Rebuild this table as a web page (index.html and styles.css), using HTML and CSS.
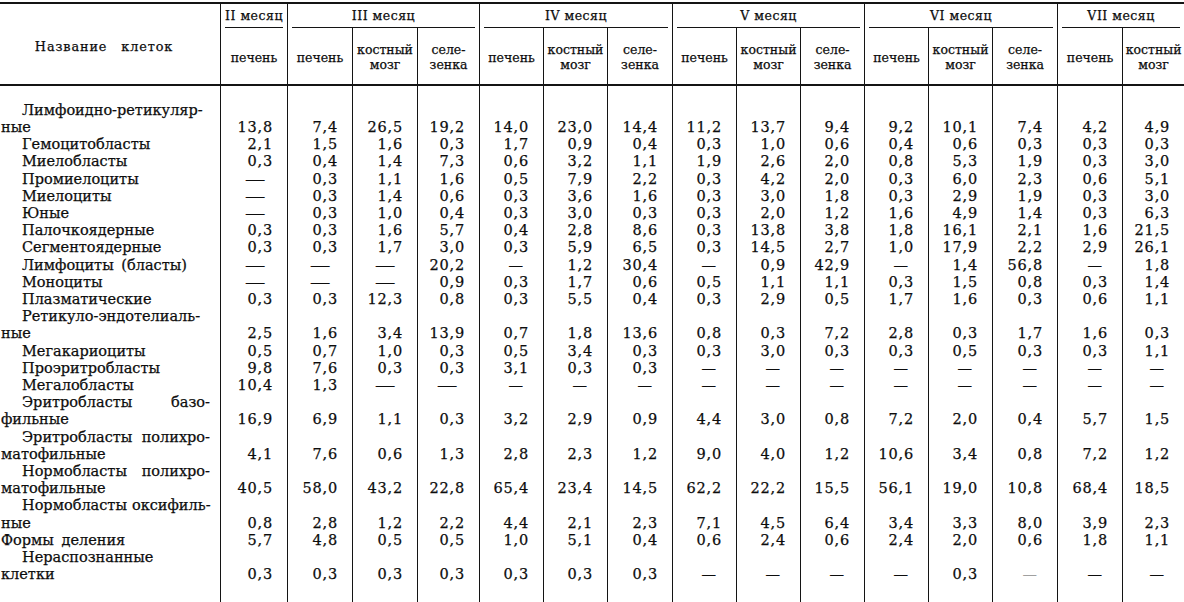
FILE: index.html
```html
<!DOCTYPE html>
<html lang="ru">
<head>
<meta charset="utf-8">
<title>Таблица</title>
<link rel="stylesheet" href="styles.css">
</head>
<body>
<table class="tbl">
<colgroup>
<col style="width:220px"><col style="width:67px"><col style="width:65px"><col style="width:65px"><col style="width:62px"><col style="width:64px"><col style="width:64px"><col style="width:65px"><col style="width:64px"><col style="width:64px"><col style="width:64px"><col style="width:64px"><col style="width:64px"><col style="width:65px"><col style="width:65px"><col style="width:62px">
</colgroup>
<thead>
<tr class="hm">
<th class="hname" rowspan="2">Название клеток</th>
<th class="mon" colspan="1"><div class="ml">II месяц</div></th>
<th class="mon" colspan="3"><div class="ml">III месяц</div></th>
<th class="mon" colspan="3"><div class="ml">IV месяц</div></th>
<th class="mon" colspan="3"><div class="ml">V месяц</div></th>
<th class="mon" colspan="3"><div class="ml">VI месяц</div></th>
<th class="mon" colspan="2"><div class="ml">VII месяц</div></th>
</tr>
<tr class="hs">
<th class="sub">печень</th>
<th class="sub">печень</th><th class="sub">костный<br>мозг</th><th class="sub">селе-<br>зенка</th>
<th class="sub">печень</th><th class="sub">костный<br>мозг</th><th class="sub">селе-<br>зенка</th>
<th class="sub">печень</th><th class="sub">костный<br>мозг</th><th class="sub">селе-<br>зенка</th>
<th class="sub">печень</th><th class="sub">костный<br>мозг</th><th class="sub">селе-<br>зенка</th>
<th class="sub">печень</th><th class="sub">костный<br>мозг</th>
</tr>
</thead>
<tbody>
<tr class="first"><td class="lab"><div class="l1">Лимфоидно-ретикуляр-</div><div class="l2">ные</div></td><td>13,8</td><td>7,4</td><td>26,5</td><td>19,2</td><td>14,0</td><td>23,0</td><td>14,4</td><td>11,2</td><td>13,7</td><td>9,4</td><td>9,2</td><td>10,1</td><td>7,4</td><td>4,2</td><td>4,9</td></tr>
<tr><td class="lab"><div class="l1">Гемоцитобласты</div></td><td>2,1</td><td>1,5</td><td>1,6</td><td>0,3</td><td>1,7</td><td>0,9</td><td>0,4</td><td>0,3</td><td>1,0</td><td>0,6</td><td>0,4</td><td>0,6</td><td>0,3</td><td>0,3</td><td>0,3</td></tr>
<tr><td class="lab"><div class="l1">Миелобласты</div></td><td>0,3</td><td>0,4</td><td>1,4</td><td>7,3</td><td>0,6</td><td>3,2</td><td>1,1</td><td>1,9</td><td>2,6</td><td>2,0</td><td>0,8</td><td>5,3</td><td>1,9</td><td>0,3</td><td>3,0</td></tr>
<tr><td class="lab"><div class="l1">Промиелоциты</div></td><td class="d lg"><span>—</span></td><td>0,3</td><td>1,1</td><td>1,6</td><td>0,5</td><td>7,9</td><td>2,2</td><td>0,3</td><td>4,2</td><td>2,0</td><td>0,3</td><td>6,0</td><td>2,3</td><td>0,6</td><td>5,1</td></tr>
<tr><td class="lab"><div class="l1">Миелоциты</div></td><td class="d lg"><span>—</span></td><td>0,3</td><td>1,4</td><td>0,6</td><td>0,3</td><td>3,6</td><td>1,6</td><td>0,3</td><td>3,0</td><td>1,8</td><td>0,3</td><td>2,9</td><td>1,9</td><td>0,3</td><td>3,0</td></tr>
<tr><td class="lab"><div class="l1">Юные</div></td><td class="d lg"><span>—</span></td><td>0,3</td><td>1,0</td><td>0,4</td><td>0,3</td><td>3,0</td><td>0,3</td><td>0,3</td><td>2,0</td><td>1,2</td><td>1,6</td><td>4,9</td><td>1,4</td><td>0,3</td><td>6,3</td></tr>
<tr><td class="lab"><div class="l1">Палочкоядерные</div></td><td>0,3</td><td>0,3</td><td>1,6</td><td>5,7</td><td>0,4</td><td>2,8</td><td>8,6</td><td>0,3</td><td>13,8</td><td>3,8</td><td>1,8</td><td>16,1</td><td>2,1</td><td>1,6</td><td>21,5</td></tr>
<tr><td class="lab"><div class="l1">Сегментоядерные</div></td><td>0,3</td><td>0,3</td><td>1,7</td><td>3,0</td><td>0,3</td><td>5,9</td><td>6,5</td><td>0,3</td><td>14,5</td><td>2,7</td><td>1,0</td><td>17,9</td><td>2,2</td><td>2,9</td><td>26,1</td></tr>
<tr><td class="lab"><div class="l1 ws">Лимфоциты (бласты)</div></td><td class="d lg"><span>—</span></td><td class="d lg"><span>—</span></td><td class="d lg"><span>—</span></td><td>20,2</td><td class="d"><span>—</span></td><td>1,2</td><td>30,4</td><td class="d"><span>—</span></td><td>0,9</td><td>42,9</td><td class="d"><span>—</span></td><td>1,4</td><td>56,8</td><td class="d"><span>—</span></td><td>1,8</td></tr>
<tr><td class="lab"><div class="l1">Моноциты</div></td><td class="d lg"><span>—</span></td><td class="d lg"><span>—</span></td><td class="d lg"><span>—</span></td><td>0,9</td><td>0,3</td><td>1,7</td><td>0,6</td><td>0,5</td><td>1,1</td><td>1,1</td><td>0,3</td><td>1,5</td><td>0,8</td><td>0,3</td><td>1,4</td></tr>
<tr><td class="lab"><div class="l1">Плазматические</div></td><td>0,3</td><td>0,3</td><td>12,3</td><td>0,8</td><td>0,3</td><td>5,5</td><td>0,4</td><td>0,3</td><td>2,9</td><td>0,5</td><td>1,7</td><td>1,6</td><td>0,3</td><td>0,6</td><td>1,1</td></tr>
<tr><td class="lab"><div class="l1">Ретикуло-эндотелиаль-</div><div class="l2">ные</div></td><td>2,5</td><td>1,6</td><td>3,4</td><td>13,9</td><td>0,7</td><td>1,8</td><td>13,6</td><td>0,8</td><td>0,3</td><td>7,2</td><td>2,8</td><td>0,3</td><td>1,7</td><td>1,6</td><td>0,3</td></tr>
<tr><td class="lab"><div class="l1">Мегакариоциты</div></td><td>0,5</td><td>0,7</td><td>1,0</td><td>0,3</td><td>0,5</td><td>3,4</td><td>0,3</td><td>0,3</td><td>3,0</td><td>0,3</td><td>0,3</td><td>0,5</td><td>0,3</td><td>0,3</td><td>1,1</td></tr>
<tr><td class="lab"><div class="l1">Проэритробласты</div></td><td>9,8</td><td>7,6</td><td>0,3</td><td>0,3</td><td>3,1</td><td>0,3</td><td>0,3</td><td class="d"><span>—</span></td><td class="d"><span>—</span></td><td class="d"><span>—</span></td><td class="d"><span>—</span></td><td class="d"><span>—</span></td><td class="d"><span>—</span></td><td class="d"><span>—</span></td><td class="d"><span>—</span></td></tr>
<tr><td class="lab"><div class="l1">Мегалобласты</div></td><td>10,4</td><td>1,3</td><td class="d lg"><span>—</span></td><td class="d lg"><span>—</span></td><td class="d"><span>—</span></td><td class="d"><span>—</span></td><td class="d"><span>—</span></td><td class="d"><span>—</span></td><td class="d"><span>—</span></td><td class="d"><span>—</span></td><td class="d"><span>—</span></td><td class="d"><span>—</span></td><td class="d"><span>—</span></td><td class="d"><span>—</span></td><td class="d"><span>—</span></td></tr>
<tr><td class="lab"><div class="l1 jl"><span>Эритробласты</span><span>базо-</span></div><div class="l2">фильные</div></td><td>16,9</td><td>6,9</td><td>1,1</td><td>0,3</td><td>3,2</td><td>2,9</td><td>0,9</td><td>4,4</td><td>3,0</td><td>0,8</td><td>7,2</td><td>2,0</td><td>0,4</td><td>5,7</td><td>1,5</td></tr>
<tr><td class="lab"><div class="l1 jl"><span>Эритробласты</span><span>полихро-</span></div><div class="l2">матофильные</div></td><td>4,1</td><td>7,6</td><td>0,6</td><td>1,3</td><td>2,8</td><td>2,3</td><td>1,2</td><td>9,0</td><td>4,0</td><td>1,2</td><td>10,6</td><td>3,4</td><td>0,8</td><td>7,2</td><td>1,2</td></tr>
<tr><td class="lab"><div class="l1 jl"><span>Нормобласты</span><span>полихро-</span></div><div class="l2">матофильные</div></td><td>40,5</td><td>58,0</td><td>43,2</td><td>22,8</td><td>65,4</td><td>23,4</td><td>14,5</td><td>62,2</td><td>22,2</td><td>15,5</td><td>56,1</td><td>19,0</td><td>10,8</td><td>68,4</td><td>18,5</td></tr>
<tr><td class="lab"><div class="l1 jl"><span>Нормобласты</span><span>оксифиль-</span></div><div class="l2">ные</div></td><td>0,8</td><td>2,8</td><td>1,2</td><td>2,2</td><td>4,4</td><td>2,1</td><td>2,3</td><td>7,1</td><td>4,5</td><td>6,4</td><td>3,4</td><td>3,3</td><td>8,0</td><td>3,9</td><td>2,3</td></tr>
<tr><td class="lab"><div class="l2 ws">Формы деления</div></td><td>5,7</td><td>4,8</td><td>0,5</td><td>0,5</td><td>1,0</td><td>5,1</td><td>0,4</td><td>0,6</td><td>2,4</td><td>0,6</td><td>2,4</td><td>2,0</td><td>0,6</td><td>1,8</td><td>1,1</td></tr>
<tr><td class="lab"><div class="l1">Нераспознанные</div><div class="l2">клетки</div></td><td>0,3</td><td>0,3</td><td>0,3</td><td>0,3</td><td>0,3</td><td>0,3</td><td>0,3</td><td class="d"><span>—</span></td><td class="d"><span>—</span></td><td class="d"><span>—</span></td><td class="d"><span>—</span></td><td>0,3</td><td class="d faint"><span>—</span></td><td class="d"><span>—</span></td><td class="d"><span>—</span></td></tr>
<tr class="tail"><td class="lab"></td><td></td><td></td><td></td><td></td><td></td><td></td><td></td><td></td><td></td><td></td><td></td><td></td><td></td><td></td><td></td></tr>
</tbody>
</table>
</body>
</html>
```

FILE: styles.css
```css
html, body {
  margin: 0;
  padding: 0;
  background: #ffffff;
}
body {
  width: 1184px;
  height: 602px;
  overflow: hidden;
  color: #0d0d0d;
  font-family: "DejaVu Serif", "Liberation Serif", serif;
  -webkit-text-stroke: 0.25px #0d0d0d;
}
.tbl {
  margin-top: 2px;
  width: 1184px;
  table-layout: fixed;
  border-collapse: separate;
  border-spacing: 0;
}
.tbl th {
  font-weight: normal;
  padding: 0;
}
.hm th {
  border-top: 2px solid #141414;
  height: 24px;
  vertical-align: bottom;
}
.hname {
  border-bottom: 2px solid #141414;
  font-size: 12.8px;
  letter-spacing: 0.9px;
  word-spacing: 9px;
  vertical-align: middle !important;
  padding: 4px 12px 0 0 !important;
  text-align: center;
}
.mon {
  border-left: 1px solid #141414;
}
.ml {
  margin: 0 4px;
  height: 24px;
  box-sizing: border-box;
  border-bottom: 1px solid #141414;
  font-size: 12.5px;
  letter-spacing: 0.5px;
  line-height: 24px;
  white-space: nowrap;
  text-align: center;
}
.hs th {
  height: 54px;
  border-left: 1px solid #141414;
  border-bottom: 2px solid #141414;
  font-size: 12.5px;
  line-height: 15px;
  text-align: center;
  vertical-align: middle;
  white-space: nowrap;
  padding-top: 2px;
}
.tbl td {
  padding: 0 14px 0 0;
  border-left: 1px solid #141414;
  font-size: 14.5px;
  line-height: 17.2px;
  letter-spacing: 0.8px;
  text-align: right;
  vertical-align: bottom;
  white-space: nowrap;
}
.tbl td.lab {
  border-left: none;
  padding: 0 10px 0 1px;
  text-align: left;
  letter-spacing: 0;
}
.l1 {
  padding-left: 21px;
}
.l2 {
  padding-left: 0;
}
.ws {
  word-spacing: 3px;
}
.jl {
  display: flex;
  justify-content: space-between;
  gap: 5px;
}
.tbl td.d {
  padding-right: 20px;
}
.tbl td.d.lg {
  padding-right: 25px;
}
.d span {
  display: inline-block;
  letter-spacing: 0;
}
.d.lg span {
  transform: scaleX(1.4);
}
.faint {
  color: #a0a0a0;
  -webkit-text-stroke: 0;
}
.first td {
  padding-top: 33px;
}
.tail td {
  height: 40px;
}
```
